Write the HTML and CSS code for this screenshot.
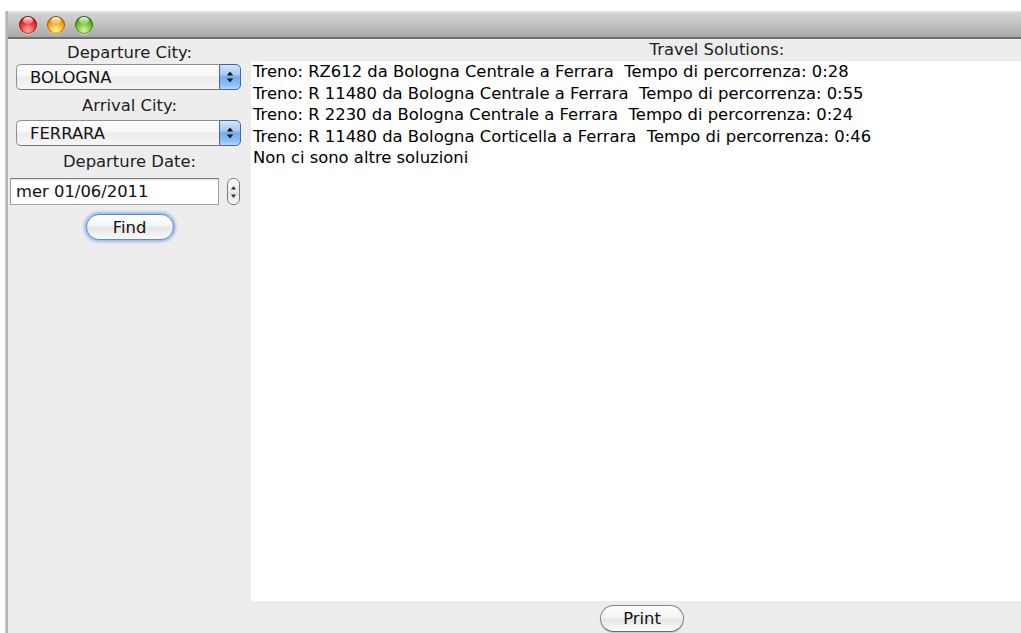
FILE: index.html
```html
<!DOCTYPE html>
<html lang="it">
<head>
<meta charset="utf-8">
<title>Travel Solutions</title>
<link rel="stylesheet" href="styles.css">
</head>
<body>
<div class="desk">
  <div class="backedge"></div>
  <div class="window">
    <div class="titlebar">
      <span class="light red"></span>
      <span class="light amber"></span>
      <span class="light green"></span>
    </div>
    <div class="content">
      <aside class="search">
        <div class="field-label first">Departure City:</div>
        <div class="combo">
          <span class="combo-value">BOLOGNA</span>
          <span class="combo-arrows">
            <svg width="8" height="14" viewBox="0 0 8 14"><path d="M4 1.5 L7.2 5.6 H0.8Z M4 12.5 L7.2 8.4 H0.8Z" fill="#111"/></svg>
          </span>
        </div>
        <div class="field-label">Arrival City:</div>
        <div class="combo">
          <span class="combo-value">FERRARA</span>
          <span class="combo-arrows">
            <svg width="8" height="14" viewBox="0 0 8 14"><path d="M4 1.5 L7.2 5.6 H0.8Z M4 12.5 L7.2 8.4 H0.8Z" fill="#111"/></svg>
          </span>
        </div>
        <div class="field-label">Departure Date:</div>
        <div class="date-row">
          <div class="date-field">mer 01/06/2011</div>
          <div class="spinner">
            <svg width="7" height="20" viewBox="0 0 7 20"><path d="M3.5 4 L6 7.5 H1Z M3.5 16 L6 12.5 H1Z" fill="#333"/></svg>
          </div>
        </div>
        <button class="btn btn-default find">Find</button>
      </aside>
      <main class="results">
        <div class="results-title">Travel Solutions:</div>
        <div class="results-text">
          <div>Treno: RZ612 da Bologna Centrale a Ferrara&nbsp; Tempo di percorrenza: 0:28</div>
          <div>Treno: R 11480 da Bologna Centrale a Ferrara&nbsp; Tempo di percorrenza: 0:55</div>
          <div>Treno: R 2230 da Bologna Centrale a Ferrara&nbsp; Tempo di percorrenza: 0:24</div>
          <div>Treno: R 11480 da Bologna Corticella a Ferrara&nbsp; Tempo di percorrenza: 0:46</div>
          <div>Non ci sono altre soluzioni</div>
        </div>
        <div class="results-footer">
          <button class="btn print">Print</button>
        </div>
      </main>
    </div>
  </div>
</div>
</body>
</html>
```
FILE: styles.css
```css
* { box-sizing: border-box; }

html, body {
  margin: 0;
  width: 1021px;
  height: 633px;
  overflow: hidden;
  background: #ffffff;
  font-family: "DejaVu Sans", "Liberation Sans", sans-serif;
  font-size: 16.4px;
  color: #000;
}

.desk {
  display: flex;
  height: 633px;
  padding-top: 11px;
}

/* edge of the window lying behind */
.backedge {
  flex: none;
  width: 3px;
  margin-left: 5px;
  background: linear-gradient(90deg, #cfcfcf, #a9a9a9);
}

.window {
  flex: 0 0 1175px;
  display: flex;
  flex-direction: column;
  background: #ededed;
}

/* ---------- title bar ---------- */
.titlebar {
  flex: none;
  height: 28px;
  display: flex;
  align-items: center;
  gap: 10px;
  padding: 1px 0 0 11px;
  background: linear-gradient(#e8e8e8 0, #d4d4d4 2px, #bfbfbf 14px, #a8a8a8 26px);
  border-bottom: 2px solid #6f6f6f;
}

.light {
  position: relative;
  width: 18px;
  height: 18px;
  border-radius: 50%;
  box-shadow: inset 0 0 0 1px rgba(0, 0, 0, 0.3), 0 1px 0 rgba(255, 255, 255, 0.45);
}
.light::after {
  content: "";
  position: absolute;
  left: 4px;
  top: 1px;
  width: 10px;
  height: 7px;
  border-radius: 50%;
  background: linear-gradient(rgba(255, 255, 255, 0.95), rgba(255, 255, 255, 0.15));
}
.red   { background: radial-gradient(circle at 50% 78%, #ffb3b3 0, #f24a4a 35%, #cc1a1a 68%, #900c0c 100%); }
.amber { background: radial-gradient(circle at 50% 78%, #ffec9e 0, #f8b733 38%, #dc7f06 70%, #a65900 100%); }
.green { background: radial-gradient(circle at 50% 78%, #d8f8a8 0, #82cd3c 38%, #41991a 70%, #2a6c0b 100%); }

/* ---------- content ---------- */
.content {
  flex: 1;
  display: flex;
  min-height: 0;
}

.search {
  flex: none;
  width: 243px;
  display: flex;
  flex-direction: column;
  align-items: flex-start;
  padding-top: 4px;
}

.field-label {
  align-self: stretch;
  text-align: center;
  line-height: 20px;
  color: #222;
  margin-top: 6px;
}
.field-label.first { margin-top: 0; }

.combo {
  display: flex;
  width: 225px;
  height: 26px;
  margin: 4px 0 0 8px;
}
.search .field-label.first + .combo { margin-top: 1px; }

.combo-value {
  flex: 1;
  display: flex;
  align-items: center;
  padding-left: 13px;
  border: 1px solid #8e8e8e;
  border-right: none;
  border-bottom-color: #777;
  border-radius: 5px 0 0 5px;
  background: linear-gradient(#ffffff 0, #f6f6f6 45%, #ececec 52%, #f7f7f7 100%);
  color: #111;
}

.combo-arrows {
  flex: none;
  width: 22px;
  display: flex;
  align-items: center;
  justify-content: center;
  border: 1px solid #3f66ad;
  border-radius: 0 5px 5px 0;
  background: linear-gradient(#d4e6fb 0, #a2c8f3 40%, #73abef 52%, #8cc2fa 85%, #b8dcff 100%);
}

.date-row {
  display: flex;
  margin-top: 6px;
  height: 27px;
}

.date-field {
  width: 209px;
  margin-left: 2px;
  padding-left: 5px;
  display: flex;
  align-items: center;
  background: #fff;
  border: 1px solid #a4a4a4;
  border-top-color: #7e7e7e;
  box-shadow: inset 0 1px 1px rgba(0, 0, 0, 0.12);
  color: #111;
}

.spinner {
  width: 13px;
  margin-left: 8px;
  border: 1px solid #7d7d7d;
  border-radius: 6px;
  background: linear-gradient(#fdfdfd, #eeeeee 50%, #e2e2e2 52%, #f6f6f6);
  display: flex;
  align-items: center;
  justify-content: center;
}

/* ---------- buttons ---------- */
.btn {
  font: inherit;
  color: #111;
  padding: 0;
  border-radius: 14px;
  border: 1px solid #858585;
  border-bottom-color: #6a6a6a;
  background: linear-gradient(#ffffff 0, #f5f5f5 45%, #e6e6e6 55%, #fbfbfb 100%);
  box-shadow: 0 1px 1px rgba(0, 0, 0, 0.15);
}

.btn-default {
  border-color: #5f8bcc;
  box-shadow: 0 0 0 1px #9fc0ec, 0 0 3px 2px rgba(96, 148, 222, 0.55);
}

.find {
  align-self: center;
  width: 88px;
  height: 26px;
  margin-top: 9px;
}

/* ---------- results ---------- */
.results {
  flex: 1;
  display: flex;
  flex-direction: column;
  min-width: 0;
}

.results-title {
  flex: none;
  height: 22px;
  line-height: 22px;
  text-align: center;
  color: #222;
}

.results-text {
  flex: 1;
  background: #ffffff;
  padding: 0 0 0 2px;
  line-height: 21.5px;
  white-space: nowrap;
}

.results-footer {
  flex: none;
  height: 32px;
  display: flex;
  align-items: flex-start;
  padding: 4px 0 0 349px;
}

.print {
  width: 84px;
  height: 27px;
}
```
